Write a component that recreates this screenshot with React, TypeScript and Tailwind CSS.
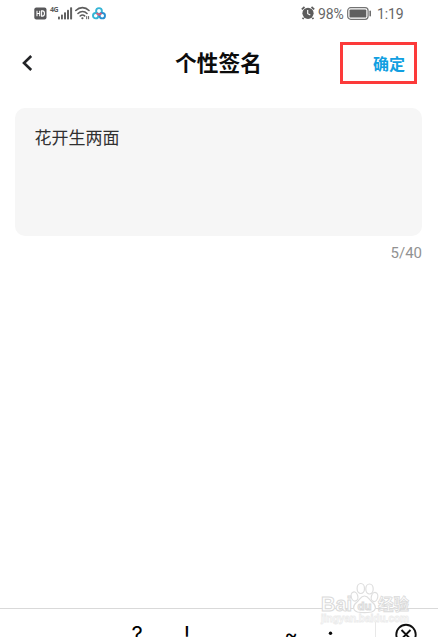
import React from "react";

const cjk = "font-['Noto_Sans','Noto_Sans_CJK_SC',sans-serif]";

function SystemStatus() {
  return (
    <div className="flex items-start">
      <svg className="mt-[7px] h-[13px] w-[13px]" viewBox="0 0 13 13">
        <rect x=".3" y=".5" width="12.2" height="12" rx="2" fill="#58585a" />
        <path d="M3 3.8v5.4M5.7 3.8v5.4M3 6.5h2.7M7.6 3.9v5.2h.9c2.6 0 2.6-5.2 0-5.2z" stroke="#fff" strokeWidth="1.1" fill="none" />
      </svg>
      <span className="ml-[3px] mt-[6px] w-[8px] text-[7px] font-bold leading-[8px] tracking-[-0.5px] text-[#5c5c5c]">4G</span>
      <svg className="mt-[6px] h-[14px] w-[15px]" viewBox="0 0 15 14" fill="#606060">
        <rect x="0" y="10.5" width="1.9" height="3" rx=".7" />
        <rect x="3" y="8.5" width="1.9" height="5" rx=".7" />
        <rect x="6" y="6.3" width="2" height="7.2" rx=".7" />
        <rect x="9" y="3.8" width="2" height="9.7" rx=".7" />
        <rect x="12.1" y="1.2" width="2" height="12.3" rx=".7" />
      </svg>
      <svg className="ml-[2px] mt-[6px] h-[14px] w-[16px]" viewBox="0 0 16 14" fill="none" stroke="#5d5d5d" strokeWidth="1.6" strokeLinecap="round">
        <path d="M.8 4.5c3.8-3.8 9.5-3.8 13.2 0M3 7.5c2.7-2.7 6.5-2.7 9 0M5.2 10c1.5-1.4 3.200-1.400 4.400-.1" />
        <path d="M7.3 12.2h.2" strokeWidth="2" />
        <path d="M11.7 10.5v2.300M13.600 10.500v2.300" strokeWidth="1" />
      </svg>
      <svg className="ml-px mt-[7px] h-[13px] w-[14px]" viewBox="0 0 14 13" fill="none" strokeWidth="1.9">
        <circle cx="7" cy="4" r="2.9" stroke="#35b4d5" />
        <circle cx="3.700" cy="8.700" r="2.700" stroke="#35b4d5" />
        <circle cx="10.300" cy="8.700" r="2.700" stroke="#288fd0" />
        <path d="M4.600 5.800Q5.400 7.300 7 7.300t2.400-1.500M7 7.300l-1 1M7 7.300l1 1" strokeWidth="1.500" stroke="#eb5871" />
      </svg>
    </div>
  );
}

function DeviceStatus() {
  return (
    <div className="flex items-start text-[#666]">
      <svg className="mt-[6px] h-[14px] w-[14px]" viewBox="0 0 14 14">
        <circle cx="7" cy="7.3" r="5.6" fill="#5c5c5c" />
        <path d="M.8 3.4 3.5 1M10.5 1l2.7 2.4M2.6 11.7l-1 1.3M11.4 11.7l1 1.3" stroke="#5c5c5c" strokeWidth="1.7" />
        <path d="M6.7 4.1v3.6l2.6 1.4" stroke="#fff" strokeWidth="1.1" fill="none" />
      </svg>
      <span className="ml-[3px] mt-[4px] w-[26px] whitespace-nowrap font-['Roboto',sans-serif] text-[14px] leading-5 tracking-[-0.1px]">98%</span>
      <svg className="ml-[3px] mt-[7px] h-[13px] w-[25px]" viewBox="0 0 25 13">
        <rect x=".7" y=".7" width="20.4" height="11.6" rx="3" fill="#fff" stroke="#737373" strokeWidth="1.2" />
        <rect x="2.5" y="2.4" width="16.8" height="8.2" rx="1.2" fill="#606060" />
        <path d="M23.2 4.2v4.6" stroke="#666" strokeWidth="1.5" strokeLinecap="round" />
      </svg>
      <span className="ml-[5px] mt-[4px] w-[27px] whitespace-nowrap font-['Roboto',sans-serif] text-[14px] leading-5 tracking-[-0.15px]">1:19</span>
    </div>
  );
}

function Watermark() {
  return (
    <svg className="pointer-events-none absolute left-[318px] top-[579px] h-[49px] w-[95px]" viewBox="0 0 95 49">
      <g fill="#fff" stroke="#dedede" strokeWidth="1.2">
        <ellipse cx="36.500" cy="17.500" rx="3.300" ry="4.600" transform="rotate(-15 36.500 17.500)" />
        <ellipse cx="42.800" cy="9.500" rx="3.700" ry="5" />
        <ellipse cx="51.500" cy="10" rx="3.700" ry="5" />
        <ellipse cx="56.500" cy="18" rx="3.200" ry="4.600" transform="rotate(15 56.500 18)" />
        <path d="M46.500 17c-4 0-4.500 4-8 6.500-4 3-4 8 1 9.500 4 .8 10 .8 14 0 5-1.500 5-6.500 1-9.500-3.500-2.500-4-6.500-8-6.500z" />
      </g>
      <g fill="#fff" stroke="#dadada" strokeWidth="1" className="font-['Liberation_Sans','Noto_Sans_CJK_SC',sans-serif] font-bold">
        <text x="3" y="32" fontSize="20" textLength="31" lengthAdjust="spacingAndGlyphs">Bai</text>
        <text x="39.500" y="30.500" fontSize="11" textLength="14" lengthAdjust="spacingAndGlyphs">du</text>
        <text x="60" y="31" fontSize="15.500" strokeWidth=".8" textLength="31" lengthAdjust="spacingAndGlyphs">经验</text>
        <text x="3" y="43" fontSize="10" stroke="#ececec" strokeWidth=".8" textLength="88" lengthAdjust="spacingAndGlyphs">jingyan.baidu.com</text>
      </g>
    </svg>
  );
}

export default function App() {
  return (
    <main className={`relative flex h-[637px] w-[438px] flex-col overflow-hidden bg-white ${cjk}`}>
      <div className="flex h-[42px] shrink-0 justify-between pl-[34px] pr-[34px]">
        <SystemStatus />
        <DeviceStatus />
      </div>

      <header className="grid h-[42px] shrink-0 grid-cols-[98px_1fr_98px] items-center">
        <button className="pl-[21px]" aria-label="返回">
          <svg className="h-[18px] w-[12px]" viewBox="0 0 12 18" fill="none" stroke="#222326" strokeWidth="2.6">
            <path d="M10.2 2 3 9l7.200 7" />
          </svg>
        </button>
        <h1 className="whitespace-nowrap pr-px text-center font-['Noto_Sans_CJK_SC',sans-serif] text-[21.7px] font-bold leading-[40px] text-[#0c0c0c] h-[42px]">个性签名</h1>
        <button className="h-[42px] w-[77px] border-[3px] border-[#fc3a3a] pr-[9px] text-right font-['Noto_Sans_CJK_SC',sans-serif] text-[16px] font-bold leading-9 text-[#119fe1]">确定</button>
      </header>

      <section className="mx-[15px] mt-[24px] w-[407px]">
        <div className="h-[128px] rounded-[10px] bg-[#f6f6f6] pl-[19.5px] pt-[16px] font-['Noto_Sans_CJK_SC',sans-serif] text-[17px] leading-[25px] text-[#303030]">花开生两面</div>
        <p className="mt-[7px] text-right font-['Roboto',sans-serif] text-[15px] leading-5 text-[#929292]">5/40</p>
      </section>

      <footer className="mt-auto flex h-[29px] shrink-0 overflow-hidden border-t border-[#d9d9d9] font-['Inter',sans-serif] text-[22px] leading-[28px] text-black">
        <span className="ml-[112px] w-[50px] pt-[11px] text-center">?</span>
        <span className="w-[50px] pt-[11px] text-center">!</span>
        <span className="ml-[54px] w-[50px] pt-[11px] text-center text-[20px]">~</span>
        <svg className="h-[28px] w-[59px]" viewBox="0 0 59 28"><circle cx="14.500" cy="24.300" r="1.700" fill="#080808" /></svg>
        <span className="mt-[13px] h-[15px] w-px bg-[#e8e8e8]" />
        <svg className="ml-[18px] mt-[14px] h-[24px] w-[24px] shrink-0" viewBox="0 0 24 24" fill="none" stroke="#101010" strokeWidth="1.900">
          <circle cx="12" cy="11.500" r="9.700" /><path d="m7.500 7 9 9M16.500 7l-9 9" />
        </svg>
      </footer>
      <Watermark />
    </main>
  );
}
